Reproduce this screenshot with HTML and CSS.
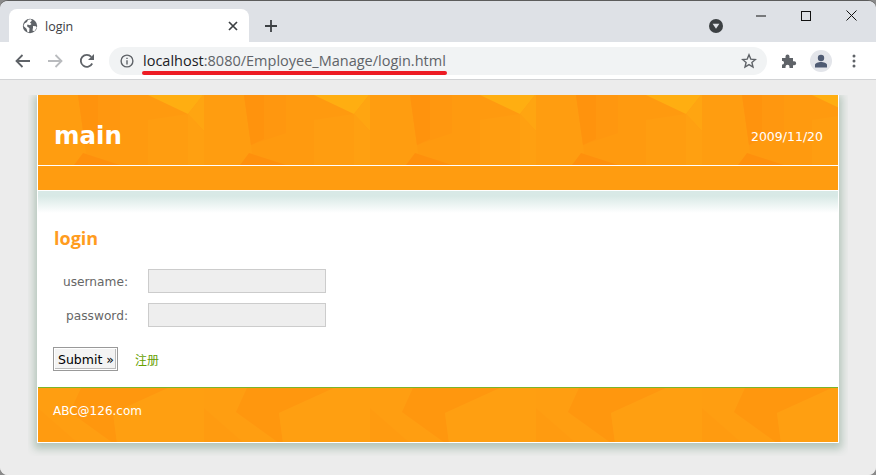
FILE: index.html
```html
<!DOCTYPE html>
<html lang="en">
<head>
<meta charset="utf-8">
<title>login</title>
<link rel="stylesheet" href="styles.css">
</head>
<body>
<div class="window">
  <div class="tabstrip">
    <div class="tab">
      <svg class="favicon" width="16" height="16" viewBox="0 0 16 16"><circle cx="8" cy="8" r="7.2" fill="#5f6368"/><path d="M2.500 5.500 5 4l1-2.200 3-.6.800 1.600L8 4.600 9.500 6l-1.500 1.200L5.500 6.500 5 8.200l2.500 2-.3 3.500-1.500.7-1.200-3.700L1.500 8z M11 8l3 .3.800 1.500-2.500 3.400-1.800-.7.500-3z" fill="#fff"/></svg>
      <span class="tab-title">login</span>
      <svg class="tab-close" width="10" height="10" viewBox="0 0 10 10"><path d="M1 1l8 8M9 1l-8 8" stroke="#3c4043" stroke-width="1.700"/></svg>
    </div>
    <svg class="newtab" width="12" height="12" viewBox="0 0 12 12"><path d="M6 0v12M0 6h12" stroke="#3c4043" stroke-width="1.800"/></svg>
    <svg class="media" width="14" height="14" viewBox="0 0 14 14"><circle cx="7" cy="7" r="7" fill="#3c4043"/><path d="M3.600 4.700h6.800L7 9.800z" fill="#dee1e6"/></svg>
    <div class="winctl">
      <svg width="10" height="10" viewBox="0 0 10 10"><path d="M0 5h10" stroke="#111" stroke-width="1"/></svg>
      <svg width="10" height="10" viewBox="0 0 10 10"><rect x=".5" y=".5" width="9" height="9" fill="none" stroke="#111"/></svg>
      <svg width="11" height="11" viewBox="0 0 11 11"><path d="M.5.5l10 10M10.500.5l-10 10" stroke="#111" stroke-width="1"/></svg>
    </div>
  </div>
  <div class="toolbar">
    <svg class="nav-back" width="16" height="14" viewBox="0 0 16 14"><path d="M15 7H2M7.500 1 1.500 7l6 6" fill="none" stroke="#5f6368" stroke-width="1.800"/></svg>
    <svg class="nav-fwd" width="16" height="14" viewBox="0 0 16 14"><path d="M1 7h13M8.500 1l6 6-6 6" fill="none" stroke="#b9bbbe" stroke-width="1.800"/></svg>
    <svg class="nav-reload" width="16" height="16" viewBox="0 0 16 16"><path d="M13.200 10.500A6 6 0 1 1 12.300 3.800" fill="none" stroke="#5f6368" stroke-width="1.800"/><path d="M15 1v6H9z" fill="#5f6368"/></svg>
    <div class="omnibox">
      <svg class="info" width="14" height="14" viewBox="0 0 14 14"><circle cx="7" cy="7" r="5.900" fill="none" stroke="#5f6368" stroke-width="1.400"/><path d="M6.300 6.200h1.400v4.200H6.300zM6.300 3.700h1.400v1.400H6.300z" fill="#5f6368"/></svg>
      <span class="url"><span class="host">localhost</span>:8080/Employee_Manage/login.html<span class="redline"></span></span>
      <svg class="star" width="16" height="16" viewBox="0 0 16 16"><path d="M8 1.800l1.800 4.300 4.600.4-3.500 3 1.100 4.500L8 11.600 4 14l1.100-4.500-3.500-3 4.600-.4z" fill="none" stroke="#5f6368" stroke-width="1.400"/></svg>
    </div>
    <svg class="puzzle" width="16" height="16" viewBox="0 0 16 16"><path d="M1 5h3.500V3.500a2 2 0 0 1 4 0V5H12v3.200h1.200a2 2 0 0 1 0 4H12V15H8.500v-1.200a2 2 0 0 0-4 0V15H1v-3.500h1a2 2 0 0 0 0-3.500H1z" fill="#5f6368"/></svg>
    <div class="avatar"><svg width="14" height="14" viewBox="0 0 14 14"><circle cx="7" cy="4" r="3.200" fill="#4f5b73"/><path d="M1 13.500v-2.500c0-1.800 3.500-3 6-3s6 1.200 6 3v2.500z" fill="#4f5b73"/></svg></div>
    <svg class="dots" width="4" height="14" viewBox="0 0 4 14"><circle cx="2" cy="2" r="1.500" fill="#5f6368"/><circle cx="2" cy="7" r="1.500" fill="#5f6368"/><circle cx="2" cy="12" r="1.500" fill="#5f6368"/></svg>
  </div>
  <div class="viewport">
    <div class="shadow-clip">
      <div class="page">
        <header class="banner">
          <h1 class="brand">main</h1>
          <span class="date">2009/11/20</span>
        </header>
        <nav class="navbar"></nav>
        <main class="content">
          <h2 class="heading">login</h2>
          <form class="form">
            <div class="field"><label class="field-label">username:</label><input class="field-input" type="text"></div>
            <div class="field"><label class="field-label">password:</label><input class="field-input" type="password"></div>
            <div class="actions"><button class="submit" type="button">Submit »</button><a class="register">注册</a></div>
          </form>
        </main>
        <footer class="footer">ABC@126.com</footer>
      </div>
    </div>
  </div>
</div>
</body>
</html>
```

FILE: styles.css
```css
* { box-sizing: border-box; }
html, body { margin: 0; padding: 0; height: 100%; overflow: hidden; }
body { background: #8a8a8a; }

.window {
  width: 876px;
  height: 475px;
  border-radius: 8px;
  overflow: hidden;
  border-top: 1px solid #5c5c5c;
  display: flex;
  flex-direction: column;
  background: #ececec;
}

.tabstrip {
  height: 41px;
  flex: none;
  background: #dee1e6;
  display: flex;
  align-items: flex-end;
  padding-left: 9px;
}
.tab {
  width: 240px;
  height: 33px;
  background: #fff;
  border-radius: 8px 8px 0 0;
  display: flex;
  align-items: center;
  padding: 0 11px 0 13px;
  font: 12.5px "Open Sans", "Noto Sans", sans-serif;
  color: #3c4043;
}
.favicon { flex: none; }
.tab-title { margin-left: 7px; padding-top: 2px; flex: 1; }
.tab-close { flex: none; }
.newtab { flex: none; margin: 0 0 10px 16px; }
.media { flex: none; margin: 0 0 9px 432px; }
.winctl {
  flex: none;
  align-self: flex-start;
  display: flex;
  align-items: center;
  margin: 9px 0 0 33px;
  gap: 35px;
}

.toolbar {
  height: 38px;
  flex: none;
  background: #fff;
  border-bottom: 1px solid #d2d3d5;
  display: flex;
  align-items: center;
  padding-left: 15px;
}
.nav-fwd { margin-left: 16px; }
.nav-reload { margin-left: 16px; }
.omnibox {
  width: 658px;
  height: 28px;
  margin-left: 14px;
  background: #f1f3f4;
  border-radius: 14px;
  display: flex;
  align-items: center;
  padding: 0 10px 0 11px;
}
.info { flex: none; }
.url {
  position: relative;
  margin-left: 9px;
  flex: 1;
  font: 14.5px "Open Sans", "Noto Sans", sans-serif;
  color: #5f6368;
  white-space: nowrap;
}
.host { color: #202124; }
.redline {
  position: absolute;
  left: -1px;
  top: 20px;
  width: 305px;
  height: 4px;
  border-radius: 2px;
  background: #ed1c24;
}
.star { flex: none; }
.puzzle { flex: none; margin-left: 14px; }
.avatar {
  flex: none;
  width: 22px;
  height: 22px;
  margin-left: 13px;
  border-radius: 50%;
  background: #e3e5ea;
  display: flex;
  align-items: center;
  justify-content: center;
}
.dots { flex: none; margin-left: 20px; }

.viewport {
  flex: 1;
  padding: 15px 28px 0;
  background: #ececec;
}
.shadow-clip {
  width: 820px;
  height: 361px;
  padding: 0 9px 13px;
  overflow: hidden;
  background: #ececec;
}
.page {
  height: 348px;
  border: 1px solid #fff;
  border-top: 0;
  background: #fff;
  box-shadow: 0 3px 8px 3px #b4c5ba;
  display: flex;
  flex-direction: column;
  font-family: "DejaVu Sans", Verdana, sans-serif;
}

.banner {
  height: 70px;
  flex: none;
  display: flex;
  align-items: center;
  justify-content: space-between;
  padding: 12px 15px 0;
  background-color: #ff9a0f;
  background-image: url("data:image/svg+xml,%3Csvg xmlns='http://www.w3.org/2000/svg' width='166' height='70'%3E%3Cpath d='M0 0h166v70H0z' fill='%23ff9a0f'/%3E%3Cpath d='M0 0h40l8 58-12 12H0z' fill='%23ff9d10'/%3E%3Cpath d='M40 0h42v38L47 50z' fill='%23ff970f'/%3E%3Cpath d='M40 0h20v44L47 50z' fill='%23ff930d'/%3E%3Cpath d='M45 58l37 12H36z' fill='%23ff900c'/%3E%3Cpath d='M110 25l40-6v51h-40z' fill='%23ff9d10'/%3E%3Cpath d='M110 0h55l-15 19z' fill='%23ffae11'/%3E%3Cpath d='M165 0h1v36l-16-17z' fill='%23ffa511'/%3E%3Cpath d='M150 19l16 17v34h-16z' fill='%23ffa011'/%3E%3C/svg%3E");
  background-size: 166px 70px;
  color: #fff;
}
.brand { margin: 0 0 0 1px; font-size: 24.500px; font-weight: 700; line-height: 1; }
.date { font-size: 12.500px; }

.navbar {
  height: 26px;
  flex: none;
  background: #ff9c10;
  border-top: 1px solid #fff;
  border-bottom: 1px solid #fff;
}

.content {
  flex: 1;
  padding: 37px 15px 0;
  background: linear-gradient(#d8e9e6 0, #d8e9e6 5px, #fff 22px);
}
.heading {
  margin: 0 0 0 1px;
  font: 700 18px/20px "Open Sans", "Noto Sans", sans-serif;
  color: #ff9c1e;
}
.form { margin-top: 21px; }
.field { display: flex; align-items: center; height: 24px; margin-bottom: 10px; }
.field-label {
  width: 75px;
  padding-top: 2px;
  text-align: right;
  font-size: 12.200px;
  color: #666;
}
.field-input {
  width: 178px;
  height: 24px;
  margin: 0 0 0 20px;
  border: 1px solid #ccc;
  background: #eee;
  padding: 0;
}
.actions { display: flex; align-items: center; margin-top: 20px; }
.submit {
  width: 65px;
  height: 24px;
  padding: 0 0 0 1px;
  border: 1px solid #999;
  box-shadow: inset 1px 1px 0 #fff, inset -1px -1px 0 #fff, inset -2px -2px 0 #bbb;
  background: #f3f3f3;
  font: 12.500px "DejaVu Sans", Verdana, sans-serif;
  color: #000;
}
.register {
  margin-left: 17px;
  font: 12px "Noto Sans CJK SC", sans-serif;
  color: #66a000;
}

.footer {
  height: 55px;
  flex: none;
  border-top: 1px solid #7ab52a;
  padding: 16px 15px 0;
  font-size: 12px;
  line-height: 15px;
  color: #fff;
  background-color: #ff9b10;
  background-image: url("data:image/svg+xml,%3Csvg xmlns='http://www.w3.org/2000/svg' width='166' height='55'%3E%3Cpath d='M0 0h166v55H0z' fill='%23ff9b10'/%3E%3Cpath d='M0 0h43L32 24l43 31H40L0 20z' fill='%23ff9e11'/%3E%3Cpath d='M43 0h87L75 25l4 30h-4L32 24z' fill='%23ff970e'/%3E%3Cpath d='M130 0h36v55H79l-4-30z' fill='%23ff9f11'/%3E%3C/svg%3E");
  background-size: 166px 55px;
}
```
